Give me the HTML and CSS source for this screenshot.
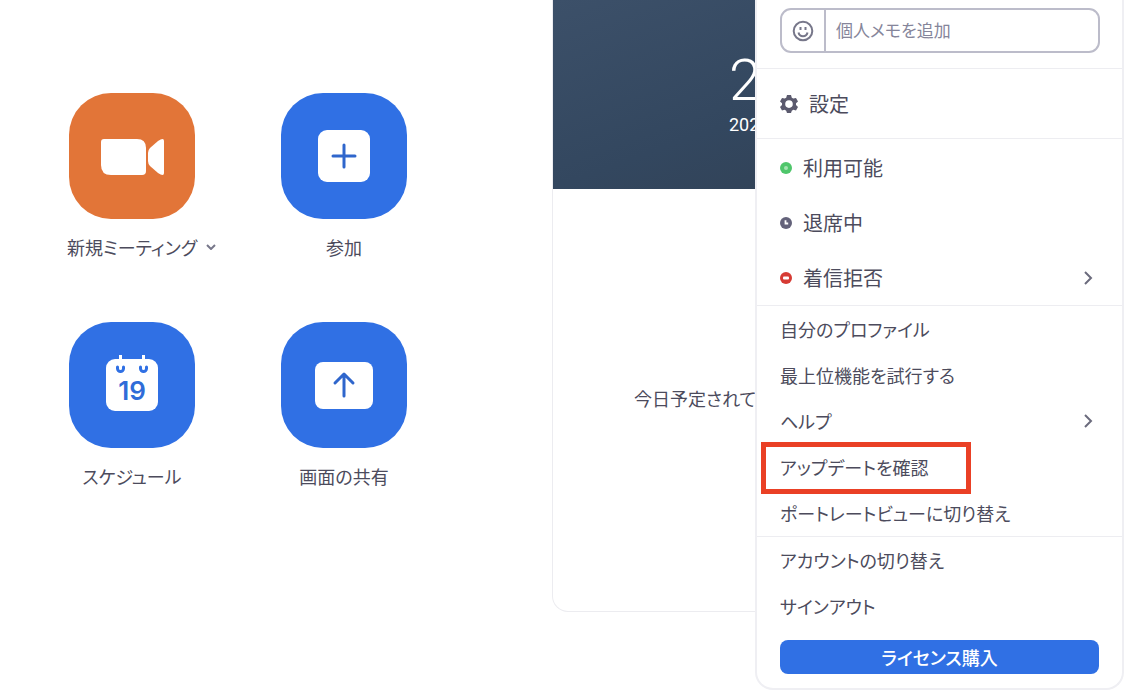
FILE: index.html
```
<!DOCTYPE html>
<html lang="ja">
<head>
    <meta charset="utf-8">
    <title>ホーム</title>
    <link rel="stylesheet" href="styles.css">
</head>
<body>
    <main class="home">
        <div class="actions">
            <div class="action">
                <button class="tile tile-orange" aria-labelledby="lbl-new">
                    <svg viewBox="0 0 126 126">
                        <path fill="#fff" d="M35 46h33q9 0 9 9v23q0 4-4 4H42q-10 0-10-10V49q0-3 3-3z"/>
                        <path fill="#fff" d="M79 60q0-3 2-5l8-7q6-4 6 0v32q0 4-6 0l-8-7q-2-2-2-5z"/>
                    </svg>
                </button>
                <div class="label">
                    <span id="lbl-new">新規ミーティング</span>
                    <button class="more" aria-label="オプション">
                        <svg width="10" height="6" viewBox="0 0 10 6"><path d="M1 1l4 4 4-4"/></svg>
                    </button>
                </div>
            </div>
            <div class="action">
                <button class="tile" aria-labelledby="lbl-join">
                    <svg viewBox="0 0 126 126">
                        <rect x="37" y="37" width="52" height="52" rx="9" fill="#fff"/>
                        <path class="mark" d="M63 52v22M52 63h22"/>
                    </svg>
                </button>
                <div class="label"><span id="lbl-join">参加</span></div>
            </div>
            <div class="action">
                <button class="tile" aria-labelledby="lbl-schedule">
                    <svg viewBox="0 0 126 126">
                        <rect x="37" y="37" width="52" height="52" rx="9" fill="#fff"/>
                        <path class="ring" d="M48.500 45v1.500a3 3 0 0 0 6 0V45M71.500 45v1.500a3 3 0 0 0 6 0V45"/>
                        <path d="M51.500 33v13M74.500 33v13" stroke="#fff" stroke-width="3"/>
                        <text class="day" x="63" y="78" text-anchor="middle">19</text>
                    </svg>
                </button>
                <div class="label"><span id="lbl-schedule">スケジュール</span></div>
            </div>
            <div class="action">
                <button class="tile" aria-labelledby="lbl-share">
                    <svg viewBox="0 0 126 126">
                        <rect x="34" y="40" width="58" height="47" rx="8" fill="#fff"/>
                        <path class="mark" d="M63 74V53M54 61l9-9 9 9"/>
                    </svg>
                </button>
                <div class="label"><span id="lbl-share">画面の共有</span></div>
            </div>
        </div>

        <section class="schedule">
            <div class="clock">
                <div class="time">2</div>
                <div class="date">202</div>
            </div>
            <div class="empty">今日予定されて</div>
        </section>
    </main>

    <div class="menu">
        <div class="group memo-group">
            <div class="memo">
                <button class="emoji" aria-label="絵文字">
                    <svg width="22" height="22" viewBox="0 0 22 22">
                        <circle cx="11" cy="11" r="9.300"/>
                        <path d="M8.500 7v3M13.500 7v3M6.500 12.500a4.600 4.600 0 0 0 9 0"/>
                    </svg>
                </button>
                <input type="text" placeholder="個人メモを追加" aria-label="個人メモを追加">
            </div>
        </div>

        <div class="group">
            <button class="item item-settings">
                <svg width="18" height="20" viewBox="0 0 18 20">
                    <path fill="#5b5a6e" fill-rule="evenodd" d="M7 1h4l.8 2.700 1.500.9 2.700-.7 2 3.500-2 1.900v1.800l2 1.900-2 3.500-2.700-.7-1.500.9L11 19H7l-.8-2.300-1.500-.9-2.700.7L0 13l2-1.900V9.300L0 7.400l2-3.500 2.700.7 1.500-.9zM9 6.300a3.800 3.800 0 1 0 0 7.600 3.800 3.800 0 0 0 0-7.600z"/>
                </svg>
                設定
            </button>
        </div>

        <div class="group status-group">
            <button class="item item-status">
                <svg width="12" height="12" viewBox="0 0 12 12"><circle cx="6" cy="6" r="6" fill="#4fc66b"/><circle cx="6" cy="6" r="2" fill="#a5e3b2"/></svg>
                利用可能
            </button>
            <button class="item item-status">
                <svg width="12" height="12" viewBox="0 0 12 12"><circle cx="6" cy="6" r="6" fill="#63627a"/><path d="M5.500 3.300v3.200h2.700" fill="none" stroke="#fff" stroke-width="1.800"/></svg>
                退席中
            </button>
            <button class="item item-status">
                <svg width="12" height="12" viewBox="0 0 12 12"><circle cx="6" cy="6" r="6" fill="#d63b34"/><rect x="3" y="4.500" width="6" height="3" rx="1" fill="#fff"/></svg>
                着信拒否
                <svg class="arrow" width="10" height="16" viewBox="0 0 10 16"><path d="M2 2l6 6-6 6"/></svg>
            </button>
        </div>

        <div class="group">
            <button class="item">自分のプロファイル</button>
            <button class="item">最上位機能を試行する</button>
            <button class="item">
                ヘルプ
                <svg class="arrow" width="10" height="16" viewBox="0 0 10 16"><path d="M2 2l6 6-6 6"/></svg>
            </button>
            <button class="item highlight">アップデートを確認</button>
            <button class="item">ポートレートビューに切り替え</button>
        </div>

        <div class="group">
            <button class="item">アカウントの切り替え</button>
            <button class="item">サインアウト</button>
        </div>

        <button class="buy">ライセンス購入</button>
    </div>
</body>
</html>
```

FILE: styles.css
```
*, *::after { box-sizing: border-box; }
body {
    margin: 0;
    position: relative;
    min-height: 100vh;
    background: #fff;
    color: #4c4b5c;
    font-family: "Noto Sans CJK JP", sans-serif;
    font-size: 18px;
    font-feature-settings: "palt";
}
button, input { font: inherit; font-feature-settings: inherit; color: inherit; }
button { margin: 0; padding: 0; border: none; background: none; cursor: pointer; }
svg { display: block; }

/* home */
.home { display: grid; grid-template-columns: 552px 1fr; align-items: start; }
.actions {
    display: grid;
    grid-template-columns: 212px 212px;
    row-gap: 62px;
    padding: 93px 0 0 26px;
}
.action { display: flex; flex-direction: column; align-items: center; gap: 15px; }
.tile { width: 126px; height: 126px; border-radius: 42px; background: #3070e4; overflow: hidden; }
.tile-orange { background: #e27538; }
.mark { fill: none; stroke: #2f66cc; stroke-width: 3; stroke-linecap: round; stroke-linejoin: round; }
.ring { fill: none; stroke: #3070e4; stroke-width: 3; stroke-linecap: round; }
.day { font-family: Inter, sans-serif; font-size: 26px; font-weight: 600; fill: #2f6cd8; }
.label {
    display: grid;
    grid-template-columns: 1fr auto 1fr;
    align-items: center;
    width: 100%;
    line-height: 26px;
}
.label span { grid-column: 2; }
.more { justify-self: start; padding: 6px 0 6px 9px; }
.more path { fill: none; stroke: #77778a; stroke-width: 2; }

.schedule {
    margin-right: 64px;
    border: 1px solid #ececf0;
    border-top: none;
    border-radius: 0 0 16px 16px;
}
.clock {
    padding: 46px 0 54px 176px;
    background: linear-gradient(160deg, #3c5069 0%, #33475f 50%, #303e50 100%);
    color: #fff;
    font-family: Roboto, sans-serif;
}
.time { font-size: 58px; font-weight: 300; line-height: 68px; }
.date { font-size: 18px; line-height: 21px; }
.empty {
    display: flex;
    align-items: center;
    min-height: 422px;
    padding: 0 0 4px 81px;
}

/* profile menu */
.menu {
    position: absolute;
    top: 0;
    right: 6px;
    width: 369px;
    padding-bottom: 14px;
    background: #fff;
    border: 2px solid #efeff3;
    border-top: none;
    border-radius: 0 0 18px 18px;
}
.group { border-bottom: 1px solid #ededf1; }
.group:nth-last-child(2) { border-bottom: none; }
.memo-group { padding: 8px 22px 15px 23px; }
.memo {
    display: flex;
    height: 45px;
    border: 2px solid #bcbcca;
    border-radius: 11px;
}
.emoji { display: flex; align-items: center; justify-content: center; width: 44px; border-right: 2px solid #bcbcca; }
.emoji svg { fill: none; stroke: #77778a; stroke-width: 2; }
.memo input {
    flex: 1;
    min-width: 0;
    padding: 0 10px 3px;
    border: none;
    outline: none;
    background: none;
    font-size: 17px;
}
.memo input::placeholder { color: #85859a; opacity: 1; }
.item {
    display: flex;
    align-items: center;
    width: 100%;
    height: 46px;
    padding: 0 29px 0 23px;
    text-align: left;
}
.item-settings { height: 69px; gap: 11px; font-size: 20px; }
.status-group { padding-top: 1px; }
.item-status { height: 55px; gap: 11px; font-size: 20px; }
.arrow { margin-left: auto; fill: none; stroke: #6b6b7d; stroke-width: 2; }
.highlight { position: relative; }
.highlight::after {
    content: "";
    position: absolute;
    top: -2px;
    bottom: -4px;
    left: 4px;
    width: 210px;
    border: 5px solid #ea4025;
}
.buy {
    display: block;
    width: calc(100% - 46px);
    height: 34px;
    margin: 11px auto 0;
    border-radius: 8px;
    background: #3070e4;
    color: #fff;
    font-weight: 500;
}
```
